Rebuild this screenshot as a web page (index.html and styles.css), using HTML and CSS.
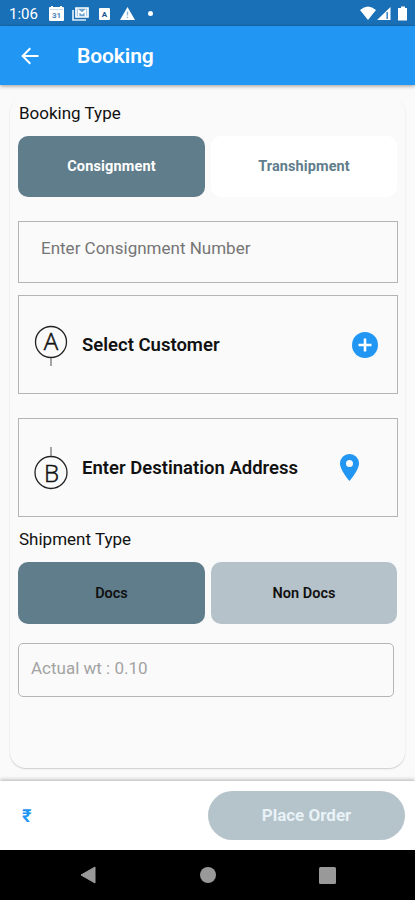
FILE: index.html
```html
<!DOCTYPE html>
<html lang="en">
<head>
<meta charset="utf-8">
<title>Booking</title>
<link rel="stylesheet" href="styles.css">
</head>
<body>
<div class="status">
  <span class="time">1:06</span>
  <svg class="calendar" width="15" height="15" viewBox="0 0 15 15"><path fill="#fff" d="M1 1h1V0h2v1h7V0h2v1h1q1 0 1 1v12q0 1-1 1H1q-1 0-1-1V2q0-1 1-1z"/><path d="M1 3.500h13" stroke="#c9dff0"/><text x="7.500" y="11.500" text-anchor="middle">31</text></svg>
  <svg class="photos" width="17" height="14" viewBox="0 0 17 14"><path fill="none" stroke="#dcebf7" stroke-width="1.700" d="M1 3v10h13"/><path fill="#6fa3d0" stroke="#fff" stroke-width="1.700" d="M4 1h12v9H4z"/><path fill="none" stroke="#fff" stroke-width="1.800" d="M6.500 9.500V3.500l3.500 3 3.500-3v6"/></svg>
  <svg class="lang" width="11" height="12" viewBox="0 0 11 12"><rect width="11" height="12" rx="1" fill="#fff"/><text x="5.500" y="9" text-anchor="middle">A</text></svg>
  <svg class="warning" width="15" height="13" viewBox="0 0 15 13"><path fill="#fff" d="M7.500 0 15 13H0z"/><path stroke="#8db4d8" stroke-width="1.400" d="M7.500 4.500v4M7.500 9.700v1.400"/></svg>
  <i class="dot"></i>
  <svg class="signals" width="48" height="15" viewBox="0 0 48 15"><path fill="#fff" d="M0 4Q8-3 16 4L8 14zM17 14 30.500 1v13z"/><path fill="#1a6eb5" d="M26.500 6h1.300v7h-1.300z"/><path fill="#fff" d="M39 2h2V.5h4V2h2v12.500h-9V2z"/></svg>
</div>
<header class="appbar">
  <svg width="18" height="18" viewBox="0 0 18 18"><path fill="none" stroke="#fff" stroke-width="2" d="M17.500 9H2M9.300 1.300 1.600 9l7.700 7.700"/></svg>
  <h1>Booking</h1>
</header>
<main>
  <section class="card">
    <h2 class="label">Booking Type</h2>
    <div class="choices top">
      <button class="choice on"><span>Consignment</span></button>
      <button class="choice plain"><span>Transhipment</span></button>
    </div>
    <div class="number"><span>Enter Consignment Number</span></div>
    <div class="place customer">
      <svg class="pin" width="36" height="44" viewBox="0 0 36 44"><circle cx="18" cy="19" r="15.500"/><path d="M18 35v8"/><text x="18" y="27" text-anchor="middle">A</text></svg>
      <strong>Select Customer</strong>
      <svg class="plus" width="26" height="26" viewBox="0 0 26 26"><circle cx="13" cy="13" r="13" fill="#2196f3"/><path d="M13 6.500v13M6.500 13h13" stroke="#fff" stroke-width="2.600"/></svg>
    </div>
    <div class="place address">
      <svg class="pin" width="36" height="44" viewBox="0 0 36 44"><circle cx="18" cy="26.500" r="16"/><path d="M18 1v9"/><text x="18.500" y="36" text-anchor="middle">B</text></svg>
      <strong>Enter Destination Address</strong>
      <svg class="marker" width="19" height="27" viewBox="0 0 19 27"><path fill="#2196f3" fill-rule="evenodd" d="M9.500 0A9.400 9.400 0 0 0 0 9.500C0 16 9.500 27 9.500 27S19 16 19 9.500A9.400 9.400 0 0 0 9.500 0zm0 6a3.500 3.500 0 1 1 0 7 3.500 3.500 0 0 1 0-7z"/></svg>
    </div>
    <h2 class="label shipment">Shipment Type</h2>
    <div class="choices">
      <button class="choice on dark"><span>Docs</span></button>
      <button class="choice pale dark"><span>Non Docs</span></button>
    </div>
    <div class="weight"><span>Actual wt : 0.10</span></div>
  </section>
</main>
<footer class="order">
  <span class="rupee">₹</span>
  <button class="submit"><span>Place Order</span></button>
</footer>
<nav>
  <svg width="16" height="18" viewBox="0 0 16 18"><path d="M15 1v16L1 9z" fill="#999" stroke="#999" stroke-linejoin="round"/></svg>
  <svg width="16" height="16" viewBox="0 0 16 16"><circle cx="8" cy="8" r="8" fill="#999"/></svg>
  <svg width="17" height="17" viewBox="0 0 17 17"><rect width="17" height="17" rx="1.500" fill="#999"/></svg>
</nav>
</body>
</html>
```
FILE: styles.css
```css
* { box-sizing: border-box; }
body {
  margin: 0;
  width: 415px;
  height: 900px;
  display: flex;
  flex-direction: column;
  overflow: hidden;
  background: #fafafa;
  font-family: Roboto, sans-serif;
  color: #111;
}
svg { display: block; flex: none; }
h1, h2 { margin: 0; }
button { border: 0; padding: 0; font: inherit; }
span, strong, h1, h2 { white-space: nowrap; }

.status {
  height: 26px;
  flex: none;
  display: flex;
  align-items: center;
  padding: 1px 7px 0 9px;
  background: #1a70b7;
  color: #fff;
}
.time { width: 40px; font-size: 15px; }
.calendar text { font: bold 8px Roboto, sans-serif; fill: #4b83b8; }
.photos { margin-left: 8px; }
.lang { margin-left: 10px; }
.lang text { font: bold 8px Roboto, sans-serif; fill: #17568f; }
.warning { margin-left: 10px; }
.dot { width: 5px; height: 5px; margin-left: 13px; border-radius: 50%; background: #fff; }
.signals { margin-left: auto; }

.appbar {
  height: 59px;
  flex: none;
  display: flex;
  align-items: center;
  gap: 38px;
  padding-left: 21px;
  background: #2196f3;
  box-shadow: 0 1px 4px rgba(0, 0, 0, 0.4);
  color: #fff;
}
.appbar h1 { font-size: 21px; font-weight: 600; letter-spacing: -0.1px; }

main { flex: 1; padding: 12px 10px 13px; }
.card {
  height: 671px;
  padding: 5px 7px 0 8px;
  border-radius: 16px;
  box-shadow: 0 1px 1.5px rgba(0, 0, 0, 0.18);
  background: #fafafa;
}
.label { height: 22px; padding-left: 1px; line-height: 22px; font-size: 17px; font-weight: 400; }
.choices { display: grid; grid-template-columns: 187px 186px; gap: 6px; height: 62px; }
.choices.top { height: 61px; margin-top: 12px; }
.choice { border-radius: 10px; font-size: 14.5px; font-weight: 700; }
.on { background: #607d8b; color: #fff; }
.top .on { letter-spacing: 0.15px; }
.plain { background: #fff; color: #607d8b; letter-spacing: 0.1px; }
.pale { background: #b5c2c9; }
.dark { color: #111; font-weight: 600; }
.number {
  height: 62px;
  margin-top: 24px;
  padding: 14px 0 0 22px;
  border: 1px solid #b4b4b4;
  font-size: 17px;
  line-height: 24px;
  color: #757575;
}
.place { display: flex; align-items: center; height: 99px; padding-left: 14px; border: 1px solid #b4b4b4; }
.customer { margin-top: 12px; }
.address { margin-top: 24px; }
.pin circle, .pin path { fill: none; stroke: #222; stroke-width: 1.3; }
.pin path { stroke: #777; }
.pin text { font: 300 24px "Open Sans", sans-serif; fill: #111; stroke: #111; stroke-width: 0.5px; }
.place strong { margin-left: 13px; font-size: 18.5px; font-weight: 600; }
.plus { margin: 0 19px 0 auto; }
.marker { margin: 0 38px 0 auto; }
.shipment { margin: 11px 0 12px; }
.weight {
  width: 376px;
  height: 54px;
  margin-top: 19px;
  padding-left: 12px;
  border: 1px solid #b5b5b5;
  border-radius: 5px;
  font-size: 17px;
  line-height: 49px;
  color: #a3a3a3;
}

.order {
  height: 69px;
  flex: none;
  display: flex;
  align-items: center;
  justify-content: space-between;
  padding: 0 10px 0 22px;
  background: #fff;
  box-shadow: 0 -1px 4px rgba(0, 0, 0, 0.3);
}
.rupee { font-size: 18px; font-weight: 700; color: #2196f3; }
.submit { width: 197px; height: 49px; padding-bottom: 1px; border-radius: 25px; background: #b5c3ca; color: #e8f2f7; font-size: 17px; font-weight: 700; }

nav {
  height: 50px;
  flex: none;
  display: flex;
  align-items: center;
  justify-content: space-between;
  padding: 0 79px 0 80px;
  background: #000;
}
```
